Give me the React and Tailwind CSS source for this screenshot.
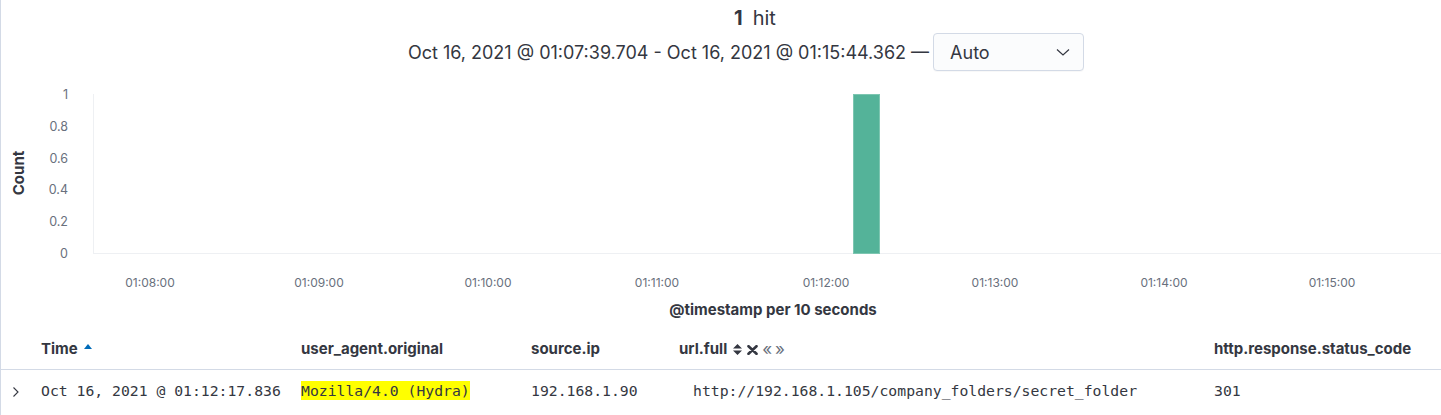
const xTicks = [
  { x: 150, label: "01:08:00" },
  { x: 319, label: "01:09:00" },
  { x: 488, label: "01:10:00" },
  { x: 657, label: "01:11:00" },
  { x: 826, label: "01:12:00" },
  { x: 995, label: "01:13:00" },
  { x: 1164, label: "01:14:00" },
  { x: 1332, label: "01:15:00" },
];

const yTicks = [
  { y: 94, label: "1" },
  { y: 126, label: "0.8" },
  { y: 158, label: "0.6" },
  { y: 189, label: "0.4" },
  { y: 221, label: "0.2" },
  { y: 253, label: "0" },
];

function Histogram() {
  return (
    <svg className="block mt-[9px]" width="1440" height="242" viewBox="1 80 1440 242">
      <line x1="93.5" y1="94" x2="93.5" y2="253" stroke="#eef0f3" />
      <line x1="93" y1="253.5" x2="1441" y2="253.5" stroke="#eef0f3" />
      <rect x="853.5" y="94.5" width="26" height="159" fill="#54b399" stroke="#7dc6b1" strokeWidth="1" />
      {yTicks.map((t) => (
        <text key={t.label} x="68" y={t.y + 4.5} textAnchor="end" fontSize="12.5" fill="#69707d" fontFamily="Inter, sans-serif">
          {t.label}
        </text>
      ))}
      {xTicks.map((t) => (
        <text key={t.label} x={t.x} y="287" textAnchor="middle" fontSize="12" fill="#69707d" fontFamily="Inter, sans-serif">
          {t.label}
        </text>
      ))}
      <text x="18" y="173" transform="rotate(-90 18 173)" textAnchor="middle" dominantBaseline="central" fontSize="15" fontWeight="700" fill="#343741" fontFamily="Inter, sans-serif">
        Count
      </text>
      <text x="773" y="315" textAnchor="middle" fontSize="15" fontWeight="700" fill="#343741" fontFamily="Inter, sans-serif">
        @timestamp per 10 seconds
      </text>
    </svg>
  );
}

function SortUp() {
  return (
    <svg width="8" height="5" viewBox="0 0 8 5" className="ml-[6px] mb-[6px]">
      <path d="M0 5 L4 0 L8 5 Z" fill="#006bb8" />
    </svg>
  );
}

function UrlActions() {
  return (
    <span className="flex items-center ml-[5px] gap-[4px]">
      <svg width="11" height="13" viewBox="0 0 11 13">
        <path d="M1 5.5 L5.5 1 L10 5.5 Z M1 7.5 L5.5 12 L10 7.5 Z" fill="#343741" />
      </svg>
      <svg width="11" height="10" viewBox="0 0 11 10">
        <path d="M1.5 1.2 L9.5 8.8 M9.5 1.2 L1.5 8.8" stroke="#343741" strokeWidth="2.6" strokeLinecap="round" />
      </svg>
      <span className="flex items-center gap-[3px] text-[#69707d] text-[17px] font-normal leading-none pb-[1px]">
        <span>«</span>
        <span>»</span>
      </span>
    </span>
  );
}

export default function App() {
  return (
    <div
      className="relative w-[1441px] h-[415px] overflow-hidden bg-white border-l border-[#d3dae6] text-[#343741]"
      style={{ fontFamily: "Inter, 'Noto Sans', sans-serif" }}
    >
      <div className="flex justify-center pl-[68px] pt-[6px]">
        <div className="text-[20px] leading-[24px] text-[#343741]">
          <span className="font-bold">1</span>
          <span className="ml-[10px]">hit</span>
        </div>
      </div>
      <div className="flex justify-center items-center pl-[50px] mt-[3px]">
        <span className="text-[18px] text-[#343741] mr-[4px]">
          Oct 16, 2021 @ 01:07:39.704 - Oct 16, 2021 @ 01:15:44.362 —
        </span>
        <div className="flex items-center justify-between w-[151px] h-[38px] rounded-[4px] border border-[#d3dae6] bg-[#fbfcfd] pl-[16px] pr-[12px] shadow-[0_1px_1px_rgba(0,0,0,0.03)]">
          <span className="text-[18px] text-[#343741]">Auto</span>
          <svg width="16" height="16" viewBox="0 0 16 16">
            <path d="M2 5.5 L8 11 L14 5.5" fill="none" stroke="#343741" strokeWidth="1.2" />
          </svg>
        </div>
      </div>
      <Histogram />
      <div className="flex items-center h-[48px] pt-[8px] border-b border-[#d3dae6] text-[15px] font-bold text-[#343741]">
        <div className="w-[40px]" />
        <div className="w-[260px] flex items-center">
          Time
          <SortUp />
        </div>
        <div className="w-[230px]">user_agent.original</div>
        <div className="w-[148px]">source.ip</div>
        <div className="w-[535px] flex items-center">
          url.full
          <UrlActions />
        </div>
        <div>http.response.status_code</div>
      </div>
      <div
        className="flex items-center h-[42px] pt-[1px] text-[14.75px] text-[#343741]"
        style={{ fontFamily: "'DejaVu Sans Mono', 'Liberation Mono', monospace" }}
      >
        <div className="w-[40px] flex pl-[10px]">
          <svg width="10" height="12" viewBox="0 0 10 12">
            <path d="M2.5 1.5 L7 6 L2.5 10.5" fill="none" stroke="#343741" strokeWidth="1.1" />
          </svg>
        </div>
        <div className="w-[260px]">Oct 16, 2021 @ 01:12:17.836</div>
        <div className="w-[230px]">
          <span className="bg-[#ffff00] leading-[19px] inline-block">Mozilla/4.0 (Hydra)</span>
        </div>
        <div className="w-[162px]">192.168.1.90</div>
        <div className="w-[521px]">http://192.168.1.105/company_folders/secret_folder</div>
        <div>301</div>
      </div>
    </div>
  );
}
